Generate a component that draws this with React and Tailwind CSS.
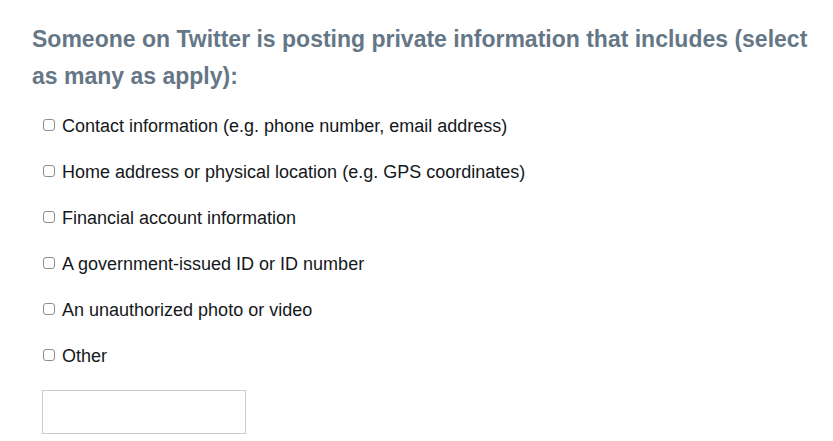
import React, { useState } from 'react';

const options = [
  'Contact information (e.g. phone number, email address)',
  'Home address or physical location (e.g. GPS coordinates)',
  'Financial account information',
  'A government-issued ID or ID number',
  'An unauthorized photo or video',
  'Other',
];

export default function App() {
  const [checked, setChecked] = useState({});
  const [other, setOther] = useState('');

  return (
    <div className="bg-white min-h-[441px] pl-[32px] pr-[20px] pt-[21px] font-['Liberation_Sans',Arial,sans-serif]">
      <h2 className="text-[23px] leading-[37px] font-bold text-[#657786] max-w-[795px]">
        Someone on Twitter is posting private information that includes (select as many as apply):
      </h2>
      <div className="mt-[8px] pl-[11px]">
        {options.map(o => (
          <label key={o} className="flex items-center h-[46px] text-[18px] text-[#14171a]">
            <input
              type="checkbox"
              checked={!!checked[o]}
              onChange={e => setChecked({ ...checked, [o]: e.target.checked })}
              className="appearance-none w-[12px] h-[12px] mr-[7px] mb-[2px] shrink-0 border border-[#8e8e8e] rounded-[3px] bg-white checked:bg-[#1da1f2] checked:border-[#1da1f2]"
            />
            {o}
          </label>
        ))}
      </div>
      <input
        type="text"
        value={other}
        onChange={e => setOther(e.target.value)}
        className="mt-[11px] ml-[10px] w-[204px] h-[44px] border border-[#cccccc] px-2 text-[16px] outline-none"
      />
    </div>
  );
}
